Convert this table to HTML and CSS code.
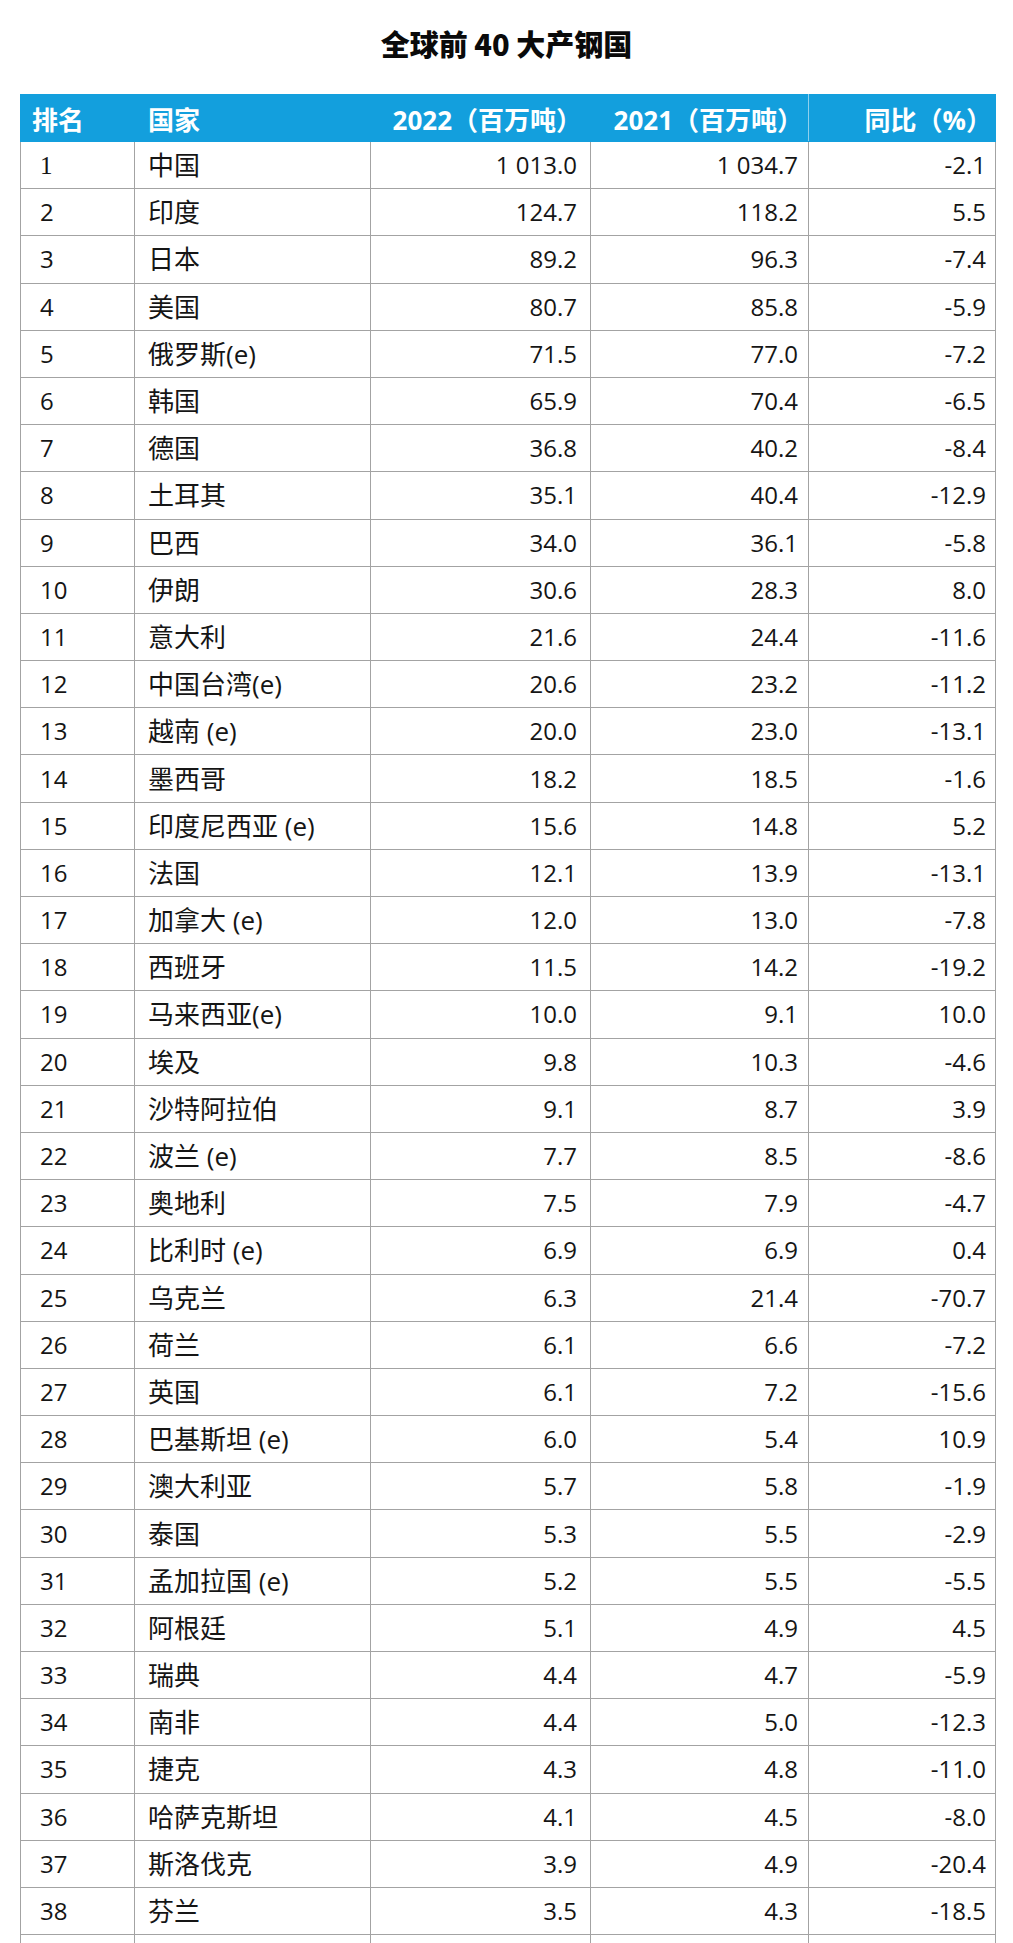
FILE: index.html
```html
<!DOCTYPE html>
<html lang="zh-CN">
<head>
<meta charset="utf-8">
<title>全球前 40 大产钢国</title>
<link rel="stylesheet" href="styles.css">
</head>
<body>
<h1 class="title">全球前 40 大产钢国</h1>
<table class="steel">
<colgroup>
<col class="c-rank"><col class="c-country"><col class="c-y22"><col class="c-y21"><col class="c-yoy">
</colgroup>
<thead>
<tr>
<th class="h-rank">排名</th>
<th class="h-country">国家</th>
<th class="h-y22">2022（百万吨）</th>
<th class="h-y21">2021（百万吨）</th>
<th class="h-yoy">同比（%）</th>
</tr>
</thead>
<tbody>
<tr><td class="rank serif">1</td><td class="country">中国</td><td class="num n22">1 013.0</td><td class="num n21">1 034.7</td><td class="num nyoy">-2.1</td></tr>
<tr><td class="rank">2</td><td class="country">印度</td><td class="num n22">124.7</td><td class="num n21">118.2</td><td class="num nyoy">5.5</td></tr>
<tr><td class="rank">3</td><td class="country">日本</td><td class="num n22">89.2</td><td class="num n21">96.3</td><td class="num nyoy">-7.4</td></tr>
<tr><td class="rank">4</td><td class="country">美国</td><td class="num n22">80.7</td><td class="num n21">85.8</td><td class="num nyoy">-5.9</td></tr>
<tr><td class="rank">5</td><td class="country">俄罗斯(e)</td><td class="num n22">71.5</td><td class="num n21">77.0</td><td class="num nyoy">-7.2</td></tr>
<tr><td class="rank">6</td><td class="country">韩国</td><td class="num n22">65.9</td><td class="num n21">70.4</td><td class="num nyoy">-6.5</td></tr>
<tr><td class="rank">7</td><td class="country">德国</td><td class="num n22">36.8</td><td class="num n21">40.2</td><td class="num nyoy">-8.4</td></tr>
<tr><td class="rank">8</td><td class="country">土耳其</td><td class="num n22">35.1</td><td class="num n21">40.4</td><td class="num nyoy">-12.9</td></tr>
<tr><td class="rank">9</td><td class="country">巴西</td><td class="num n22">34.0</td><td class="num n21">36.1</td><td class="num nyoy">-5.8</td></tr>
<tr><td class="rank">10</td><td class="country">伊朗</td><td class="num n22">30.6</td><td class="num n21">28.3</td><td class="num nyoy">8.0</td></tr>
<tr><td class="rank">11</td><td class="country">意大利</td><td class="num n22">21.6</td><td class="num n21">24.4</td><td class="num nyoy">-11.6</td></tr>
<tr><td class="rank">12</td><td class="country">中国台湾(e)</td><td class="num n22">20.6</td><td class="num n21">23.2</td><td class="num nyoy">-11.2</td></tr>
<tr><td class="rank">13</td><td class="country">越南 (e)</td><td class="num n22">20.0</td><td class="num n21">23.0</td><td class="num nyoy">-13.1</td></tr>
<tr><td class="rank">14</td><td class="country">墨西哥</td><td class="num n22">18.2</td><td class="num n21">18.5</td><td class="num nyoy">-1.6</td></tr>
<tr><td class="rank">15</td><td class="country">印度尼西亚 (e)</td><td class="num n22">15.6</td><td class="num n21">14.8</td><td class="num nyoy">5.2</td></tr>
<tr><td class="rank">16</td><td class="country">法国</td><td class="num n22">12.1</td><td class="num n21">13.9</td><td class="num nyoy">-13.1</td></tr>
<tr><td class="rank">17</td><td class="country">加拿大 (e)</td><td class="num n22">12.0</td><td class="num n21">13.0</td><td class="num nyoy">-7.8</td></tr>
<tr><td class="rank">18</td><td class="country">西班牙</td><td class="num n22">11.5</td><td class="num n21">14.2</td><td class="num nyoy">-19.2</td></tr>
<tr><td class="rank">19</td><td class="country">马来西亚(e)</td><td class="num n22">10.0</td><td class="num n21">9.1</td><td class="num nyoy">10.0</td></tr>
<tr><td class="rank">20</td><td class="country">埃及</td><td class="num n22">9.8</td><td class="num n21">10.3</td><td class="num nyoy">-4.6</td></tr>
<tr><td class="rank">21</td><td class="country">沙特阿拉伯</td><td class="num n22">9.1</td><td class="num n21">8.7</td><td class="num nyoy">3.9</td></tr>
<tr><td class="rank">22</td><td class="country">波兰 (e)</td><td class="num n22">7.7</td><td class="num n21">8.5</td><td class="num nyoy">-8.6</td></tr>
<tr><td class="rank">23</td><td class="country">奥地利</td><td class="num n22">7.5</td><td class="num n21">7.9</td><td class="num nyoy">-4.7</td></tr>
<tr><td class="rank">24</td><td class="country">比利时 (e)</td><td class="num n22">6.9</td><td class="num n21">6.9</td><td class="num nyoy">0.4</td></tr>
<tr><td class="rank">25</td><td class="country">乌克兰</td><td class="num n22">6.3</td><td class="num n21">21.4</td><td class="num nyoy">-70.7</td></tr>
<tr><td class="rank">26</td><td class="country">荷兰</td><td class="num n22">6.1</td><td class="num n21">6.6</td><td class="num nyoy">-7.2</td></tr>
<tr><td class="rank">27</td><td class="country">英国</td><td class="num n22">6.1</td><td class="num n21">7.2</td><td class="num nyoy">-15.6</td></tr>
<tr><td class="rank">28</td><td class="country">巴基斯坦 (e)</td><td class="num n22">6.0</td><td class="num n21">5.4</td><td class="num nyoy">10.9</td></tr>
<tr><td class="rank">29</td><td class="country">澳大利亚</td><td class="num n22">5.7</td><td class="num n21">5.8</td><td class="num nyoy">-1.9</td></tr>
<tr><td class="rank">30</td><td class="country">泰国</td><td class="num n22">5.3</td><td class="num n21">5.5</td><td class="num nyoy">-2.9</td></tr>
<tr><td class="rank">31</td><td class="country">孟加拉国 (e)</td><td class="num n22">5.2</td><td class="num n21">5.5</td><td class="num nyoy">-5.5</td></tr>
<tr><td class="rank">32</td><td class="country">阿根廷</td><td class="num n22">5.1</td><td class="num n21">4.9</td><td class="num nyoy">4.5</td></tr>
<tr><td class="rank">33</td><td class="country">瑞典</td><td class="num n22">4.4</td><td class="num n21">4.7</td><td class="num nyoy">-5.9</td></tr>
<tr><td class="rank">34</td><td class="country">南非</td><td class="num n22">4.4</td><td class="num n21">5.0</td><td class="num nyoy">-12.3</td></tr>
<tr><td class="rank">35</td><td class="country">捷克</td><td class="num n22">4.3</td><td class="num n21">4.8</td><td class="num nyoy">-11.0</td></tr>
<tr><td class="rank">36</td><td class="country">哈萨克斯坦</td><td class="num n22">4.1</td><td class="num n21">4.5</td><td class="num nyoy">-8.0</td></tr>
<tr><td class="rank">37</td><td class="country">斯洛伐克</td><td class="num n22">3.9</td><td class="num n21">4.9</td><td class="num nyoy">-20.4</td></tr>
<tr><td class="rank">38</td><td class="country">芬兰</td><td class="num n22">3.5</td><td class="num n21">4.3</td><td class="num nyoy">-18.5</td></tr>
<tr><td class="rank"></td><td class="country"></td><td class="num n22"></td><td class="num n21"></td><td class="num nyoy"></td></tr>
<tr><td class="rank"></td><td class="country"></td><td class="num n22"></td><td class="num n21"></td><td class="num nyoy"></td></tr>
</tbody>
</table>
</body>
</html>
```
FILE: styles.css
```css
html, body {
  margin: 0;
  padding: 0;
  background: #ffffff;
}

body {
  font-family: "Open Sans", "Noto Sans CJK SC", sans-serif;
  color: #151515;
}

.title {
  margin: 0;
  padding-top: 23px;
  height: 40px;
  line-height: 40px;
  text-align: center;
  font-family: "Noto Sans CJK SC", sans-serif;
  font-size: 29px;
  font-weight: 900;
  color: #0a0a0a;
}

.steel {
  margin: 31px 0 0 20px;
  width: 975px;
  border-collapse: collapse;
  table-layout: fixed;
}

.c-rank { width: 114px; }
.c-country { width: 236px; }
.c-y22 { width: 220px; }
.c-y21 { width: 218px; }
.c-yoy { width: 187px; }

.steel thead tr {
  height: 47px;
  background: #139fdd;
}

.steel th {
  padding: 0;
  color: #ffffff;
  font-family: "Open Sans", "Noto Sans CJK SC", sans-serif;
  font-size: 26px;
  font-weight: 700;
  white-space: nowrap;
  border: 1px solid #139fdd;
  line-height: 1;
  padding-top: 3px;
}

.steel .h-rank { text-align: left; padding-left: 11px; }
.steel .h-country { text-align: left; padding-left: 13px; }
.steel .h-y22 { text-align: right; padding-right: 8px; }
.steel .h-y21 { text-align: right; padding-right: 5px; border-right-color: #8fd0ee; }
.steel .h-yoy { text-align: right; padding-right: 3px; }

.steel tbody tr {
  height: 47.2px;
}

.steel td {
  padding: 0;
  border: 1px solid #a3a3a3;
  font-size: 24px;
  line-height: 1;
  white-space: nowrap;
}

.steel td.rank { padding-left: 19px; }
.steel td.serif { font-family: "Liberation Serif", serif; font-size: 25px; }
.steel td.country { padding-left: 13px; font-size: 26px; }
.steel td.num { text-align: right; }
.steel td.n22 { padding-right: 13px; }
.steel td.n21 { padding-right: 10px; }
.steel td.nyoy { padding-right: 9px; }
```
